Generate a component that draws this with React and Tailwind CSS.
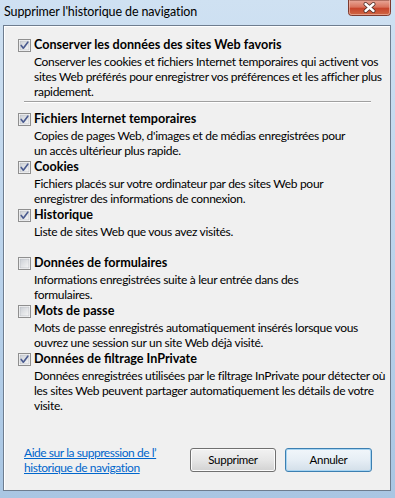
import React from "react";

const font = { fontFamily: 'Lato, "Noto Sans", Arial, sans-serif' };

function CheckBox({ checked }) {
  return (
    <svg width="13" height="13" viewBox="0 0 13 13" className="shrink-0">
      <defs>
        <linearGradient id={checked ? "cbg1" : "cbg0"} x1="0" y1="0" x2="1" y2="1">
          <stop offset="0" stopColor="#cbcfd5" />
          <stop offset="1" stopColor="#f6f6f6" />
        </linearGradient>
      </defs>
      <rect x="0.5" y="0.5" width="12" height="12" fill="#ffffff" stroke="#8f8f8f" />
      <rect x="2" y="2" width="9" height="9" fill={`url(#${checked ? "cbg1" : "cbg0"})`} stroke="#b5b9bf" strokeWidth="0.6" />
      {checked && (
        <path d="M3.2 6.4 L5.3 9.2 L9.8 3.2" fill="none" stroke="#4a5b8f" strokeWidth="1.6" strokeLinecap="round" strokeLinejoin="round" />
      )}
    </svg>
  );
}

function Item({ checked, label, lines }) {
  return (
    <div className="flex flex-col">
      <div className="flex items-center h-[18px] pl-[14px]">
        <CheckBox checked={checked} />
        <span className="ml-[3px] font-bold text-[12.6px] text-black whitespace-nowrap">{label}</span>
      </div>
      <div className="pl-[30px] text-[12px] tracking-[-0.3px] leading-[15px] text-black">
        {lines.map((l, i) => (
          <div key={i} className="whitespace-nowrap">{l}</div>
        ))}
      </div>
    </div>
  );
}

function CloseButton() {
  return (
    <svg width="43" height="16" viewBox="0 0 43 16">
      <defs>
        <linearGradient id="closeg" x1="0" y1="0" x2="0" y2="1">
          <stop offset="0" stopColor="#e9a99a" />
          <stop offset="0.45" stopColor="#d9735d" />
          <stop offset="0.55" stopColor="#c7452c" />
          <stop offset="1" stopColor="#d06a45" />
        </linearGradient>
      </defs>
      <path d="M0.5 0 L0.5 12.5 Q0.5 15.5 3.5 15.5 L39.5 15.5 Q42.5 15.5 42.5 12.5 L42.5 0 Z" fill="url(#closeg)" stroke="#7d3a2e" />
      <path d="M1.5 0 L1.5 12.5 Q1.5 14.5 3.5 14.5 L39.5 14.5 Q41.5 14.5 41.5 12.5 L41.5 0" fill="none" stroke="#f2c2b4" strokeOpacity="0.6" />
      <path d="M17.5 4 L25.5 11 M25.5 4 L17.5 11" stroke="#4a2a24" strokeWidth="4" strokeLinecap="round" />
      <path d="M17.5 4 L25.5 11 M25.5 4 L17.5 11" stroke="#ffffff" strokeWidth="2.4" strokeLinecap="round" />
    </svg>
  );
}

export default function App() {
  return (
    <div
      className="w-[395px] h-[498px] flex flex-col bg-gradient-to-b from-[#cfe1f2] via-[#bcd4ec] to-[#a9c6e3] overflow-hidden"
      style={font}
    >
      <div className="h-[25px] flex items-start justify-between shrink-0">
        <span className="mt-[4px] ml-[4px] text-[12.5px] tracking-[-0.1px] leading-[16px] text-black whitespace-nowrap">
          Supprimer l'historique de navigation
        </span>
        <div className="mr-[4px]">
          <CloseButton />
        </div>
      </div>
      <div className="ml-[3px] mr-[4px] mb-[7px] flex-1 border border-[#6e7d8f] bg-[#f0f0f0] shadow-[inset_1px_1px_0_#ffffff] flex flex-col">
        <div className="pt-[10px] flex flex-col">
          <Item
            checked
            label="Conserver les données des sites Web favoris"
            lines={[
              "Conserver les cookies et fichiers Internet temporaires qui activent vos",
              "sites Web préférés pour enregistrer vos préférences et les afficher plus",
              "rapidement.",
            ]}
          />
          <div className="ml-[20px] mr-[19px] mt-[2px] mb-[7px] h-[2px] border-t border-[#a0a0a0] border-b border-b-white" />
          <Item
            checked
            label="Fichiers Internet temporaires"
            lines={[
              "Copies de pages Web, d'images et de médias enregistrées pour",
              "un accès ultérieur plus rapide.",
            ]}
          />
          <Item
            checked
            label="Cookies"
            lines={[
              "Fichiers placés sur votre ordinateur par des sites Web pour",
              "enregistrer des informations de connexion.",
            ]}
          />
          <Item checked label="Historique" lines={["Liste de sites Web que vous avez visités."]} />
          <div className="h-[15px]" />
          <Item
            checked={false}
            label="Données de formulaires"
            lines={[
              "Informations enregistrées suite à leur entrée dans des",
              "formulaires.",
            ]}
          />
          <Item
            checked={false}
            label="Mots de passe"
            lines={[
              "Mots de passe enregistrés automatiquement insérés lorsque vous",
              "ouvrez une session sur un site Web déjà visité.",
            ]}
          />
          <Item
            checked
            label="Données de filtrage InPrivate"
            lines={[
              "Données enregistrées utilisées par le filtrage InPrivate pour détecter où",
              "les sites Web peuvent partager automatiquement les détails de votre",
              "visite.",
            ]}
          />
        </div>
        <div className="mt-auto mb-[15px] flex items-center">
          <a className="ml-[20px] text-[12px] tracking-[-0.45px] leading-[15px] text-[#0066cc] underline whitespace-nowrap">
            Aide sur la suppression de l’
            <br />
            historique de navigation
          </a>
          <button className="ml-auto w-[86px] h-[24px] rounded-[3px] border border-[#707070] bg-gradient-to-b from-[#f2f2f2] via-[#e6e6e6] to-[#d2d2d2] text-[11.5px] tracking-[-0.3px] text-black shadow-[inset_0_0_0_1px_#fbfbfb]">
            Supprimer
          </button>
          <button className="ml-[9px] mr-[18px] w-[87px] h-[24px] rounded-[3px] border border-[#3c7fb1] bg-gradient-to-b from-[#f1f6fa] via-[#e6eef5] to-[#d3dfe9] text-[11.5px] tracking-[-0.3px] text-black shadow-[inset_0_0_0_1px_#a6d4f2]">
            Annuler
          </button>
        </div>
      </div>
    </div>
  );
}
